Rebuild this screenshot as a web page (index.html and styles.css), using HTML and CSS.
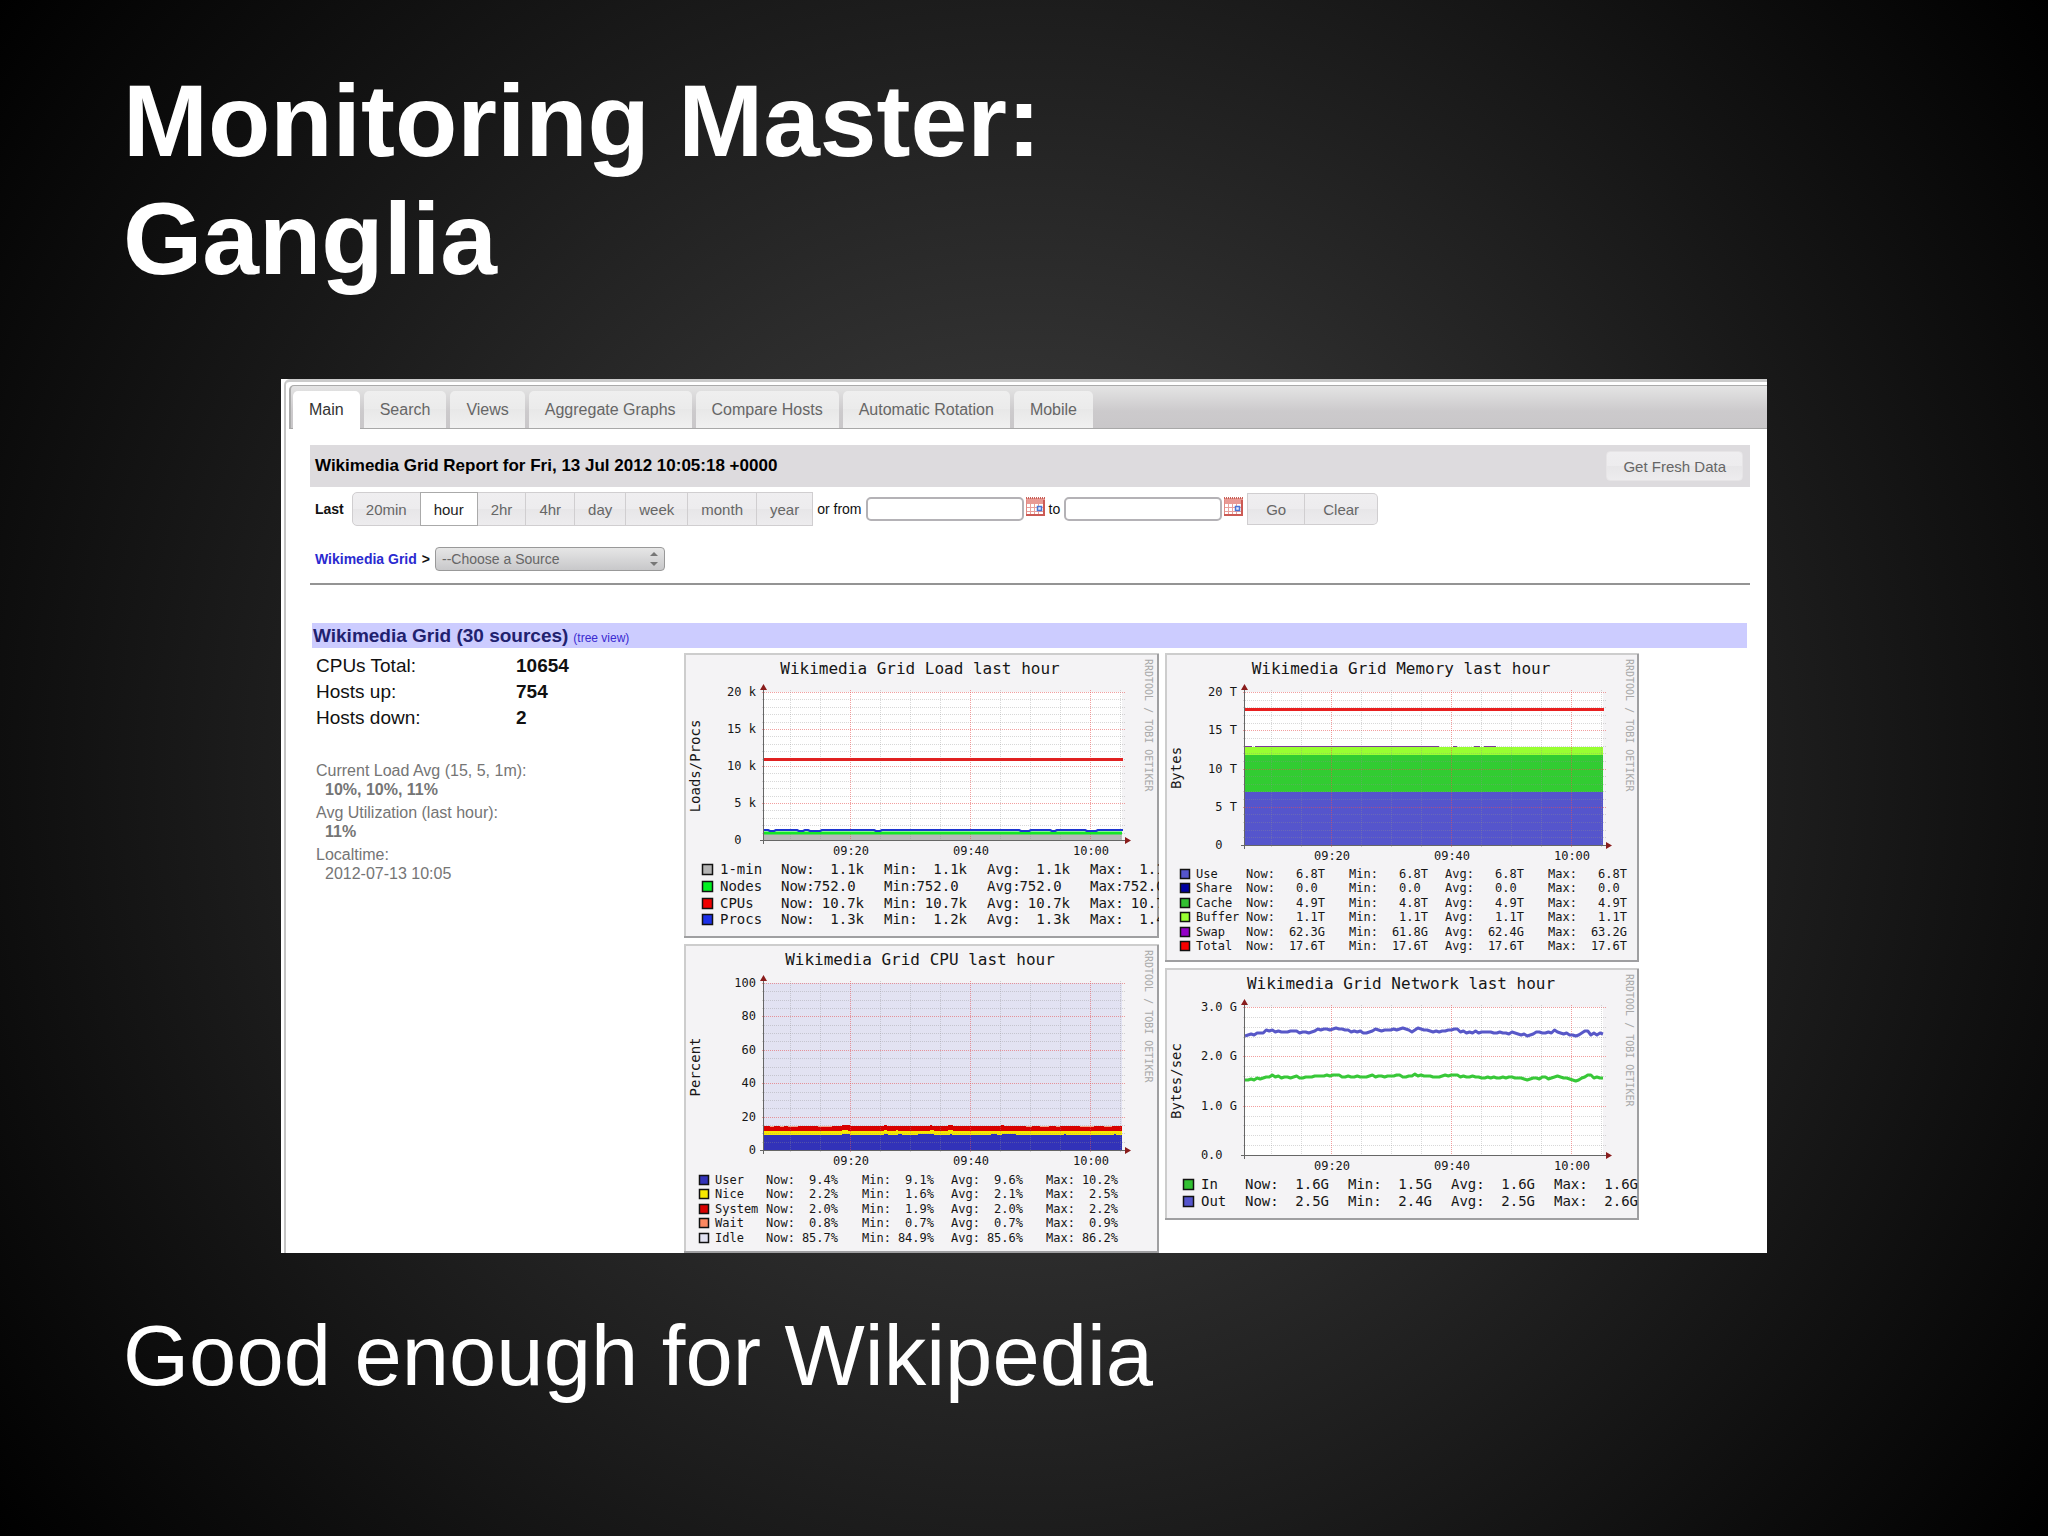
FILE: index.html
```html
<!DOCTYPE html>
<html lang="en">
<head>
  <meta charset="UTF-8">
  <title>Monitoring Master: Ganglia</title>
  <meta name="viewport" content="width=device-width, initial-scale=1.0">
  <link rel="stylesheet" href="styles.css">
</head>
<body>
  <main class="slide">
    <h1 class="slide-title">Monitoring Master:<br>Ganglia</h1>

    <section class="shot">
      <div class="window">
        <nav class="tabs">
          <a class="tab active" href="#">Main</a>
          <a class="tab" href="#">Search</a>
          <a class="tab" href="#">Views</a>
          <a class="tab" href="#">Aggregate Graphs</a>
          <a class="tab" href="#">Compare Hosts</a>
          <a class="tab" href="#">Automatic Rotation</a>
          <a class="tab" href="#">Mobile</a>
        </nav>

        <div class="content">
          <div class="report-bar">
            <h2>Wikimedia Grid Report for Fri, 13 Jul 2012 10:05:18 +0000</h2>
            <button class="btn fresh" type="button">Get Fresh Data</button>
          </div>

          <form class="range">
            <b class="last">Last</b>
            <div class="btn-group">
              <button class="btn" type="button">20min</button>
              <button class="btn active" type="button">hour</button>
              <button class="btn" type="button">2hr</button>
              <button class="btn" type="button">4hr</button>
              <button class="btn" type="button">day</button>
              <button class="btn" type="button">week</button>
              <button class="btn" type="button">month</button>
              <button class="btn" type="button">year</button>
            </div>
            <label for="from">or from</label>
            <input id="from" type="text">
            <svg class="calendar" viewBox="0 0 19 19"><use href="#cal"/></svg>
            <label for="to">to</label>
            <input id="to" type="text">
            <svg class="calendar" viewBox="0 0 19 19"><use href="#cal"/></svg>
            <div class="btn-group submit">
              <button class="btn" type="button">Go</button>
              <button class="btn" type="button">Clear</button>
            </div>
          </form>

          <div class="source">
            <a href="#">Wikimedia Grid</a>
            <label for="source">&gt;</label>
            <div class="select">
              <select id="source">
                <option>--Choose a Source</option>
              </select>
              <svg viewBox="0 0 8 16"><path d="M4 1l4 4H0zM4 15l4-4H0z" fill="#777"/></svg>
            </div>
          </div>
          <hr>

          <div class="grid-head">
            <h3>Wikimedia Grid (30 sources)</h3>
            <a href="#">(tree view)</a>
          </div>

          <div class="overview">
            <div class="stats">
              <table>
                <tr><th>CPUs Total:</th><td>10654</td></tr>
                <tr><th>Hosts up:</th><td>754</td></tr>
                <tr><th>Hosts down:</th><td>2</td></tr>
              </table>
              <dl>
                <dt>Current Load Avg (15, 5, 1m):</dt>
                <dd><b>10%, 10%, 11%</b></dd>
                <dt>Avg Utilization (last hour):</dt>
                <dd><b>11%</b></dd>
                <dt>Localtime:</dt>
                <dd>2012-07-13 10:05</dd>
              </dl>
            </div>
            <div class="graphs">
              <svg class="graph" id="load"></svg>
              <svg class="graph" id="cpu"></svg>
            </div>
            <div class="graphs">
              <svg class="graph" id="memory"></svg>
              <svg class="graph" id="network"></svg>
            </div>
          </div>
        </div>
      </div>
    </section>

    <p class="slide-note">Good enough for Wikipedia</p>
  </main>

  <!-- Shared calendar icon -->
  <svg class="symbols">
    <symbol id="cal" viewBox="0 0 19 19">
      <rect x="0" y="3" width="19" height="16" fill="#fff"/>
      <rect x="0" y="1" width="19" height="6" fill="#e89a94"/>
      <path d="M0 1h19" stroke="#c86058" stroke-width="2" stroke-dasharray="1 1"/>
      <path d="M4.500 7v11M8.500 7v11M12.500 7v11M1 10.500h17M1 14.500h17" stroke="#e8a09c"/>
      <path d="M0.500 3v15" stroke="#e08a84"/>
      <path d="M18 3v15H0" fill="none" stroke="#cc5a54" stroke-width="2"/>
      <rect x="11.500" y="9.500" width="4" height="4" fill="#dfe9fc" stroke="#4a74d4" stroke-width="1.500"/>
    </symbol>
  </svg>

  <script src="graphs.js"></script>
</body>
</html>
```

FILE: styles.css
```css
body {
  margin: 0;
  font-family: "Liberation Sans", Arial, sans-serif;
  font-size: 14px;
  color: #111;
  background: #000;
}

/* Slide */
.slide {
  box-sizing: border-box;
  min-height: 100vh;
  padding-top: 62px;
  background: radial-gradient(circle farthest-corner at center, #474747, #000);
}

.slide-title {
  margin: 0 123px 81px;
  font-size: 102px;
  line-height: 118px;
  color: #fff;
}

.slide-note {
  margin: 54px 123px 0;
  font-size: 85px;
  line-height: 98px;
  color: #fff;
}

/* Browser window */
.shot {
  margin: 0 281px;
  padding-left: 3px;
  overflow: hidden;
  background: #fff;
}

.window {
  border-top: 3px solid #cbcbcb;
  border-left: 2px solid #c4c4c4;
  border-top-left-radius: 6px;
  padding: 3px 0 0 3px;
}

.tabs {
  display: flex;
  align-items: flex-end;
  gap: 4px;
  height: 42px;
  padding-left: 2px;
  border-top: 1px solid #aaa;
  border-left: 2px solid #aaa;
  border-bottom: 1px solid #a8a8a8;
  border-top-left-radius: 5px;
  background: linear-gradient(#e4e4e4, #cccacc 60%, #c9c7c9);
}

.tab {
  height: 37px;
  padding: 0 16px;
  border-radius: 5px 5px 0 0;
  font-size: 16px;
  line-height: 37px;
  color: #666;
  text-decoration: none;
  background: linear-gradient(#efefef, #ebebeb 50%, #e8e8e8 50%, #f0f0f0);
}

.tab.active {
  height: 38px;
  margin-bottom: -1px;
  color: #333;
  background: #fff;
}

.content {
  padding: 16px 17px 0 21px;
}

/* Report header and time range */
.report-bar {
  display: flex;
  align-items: center;
  justify-content: space-between;
  height: 42px;
  padding: 0 7px 0 5px;
  background: #dddbde;
}

.report-bar h2 {
  margin: 0;
  font-size: 17px;
  color: #000;
}

.btn {
  box-sizing: border-box;
  height: 34px;
  padding: 0 13px;
  border: 1px solid #d0ced0;
  font: inherit;
  font-size: 15px;
  color: #666;
  background: linear-gradient(#efeef0, #edecee 50%, #e7e6e8 50%, #edecee);
}

.btn.active {
  border-color: #aaa;
  color: #222;
  background: #fff;
}

.btn.fresh {
  height: 30px;
  padding: 0 16px;
  border-color: #e6e4e6;
  border-radius: 4px;
}

.range {
  display: flex;
  align-items: center;
  gap: 4px;
  height: 36px;
  margin-top: 4px;
  padding-left: 5px;
}

.last {
  margin-right: 4px;
}

.btn-group {
  display: flex;
}

.btn-group .btn + .btn {
  border-left-width: 0;
}

.btn-group .btn.active {
  box-shadow: -1px 0 #aaa;
}

.btn-group .btn:first-child {
  border-radius: 5px 0 0 5px;
}

.btn-group.submit .btn {
  height: 32px;
  padding: 0 18px;
}

.btn-group.submit .btn:first-child {
  border-radius: 0;
}

.btn-group.submit .btn:last-child {
  border-radius: 0 5px 5px 0;
}

.range input {
  box-sizing: border-box;
  width: 158px;
  height: 24px;
  border: 2px solid #b4b2b6;
  border-radius: 5px;
  background: #fff;
}

.calendar {
  width: 19px;
  height: 19px;
  margin: 0 0 6px -2px;
}

.source {
  display: flex;
  align-items: center;
  gap: 5px;
  margin-top: 20px;
  padding-left: 5px;
  font-weight: bold;
}

.source a {
  color: #2a2ad0;
  text-decoration: none;
}

.select {
  position: relative;
}

.select select {
  box-sizing: border-box;
  width: 230px;
  height: 24px;
  padding: 0 6px;
  border: 1px solid #999;
  border-radius: 4px;
  appearance: none;
  font-family: inherit;
  font-size: 14px;
  color: #666;
  background: linear-gradient(#e6e6e6, #c8c8ca);
}

.select svg {
  position: absolute;
  top: 4px;
  right: 7px;
  width: 8px;
  height: 16px;
}

hr {
  height: 2px;
  margin: 12px 0 0;
  border: 0;
  background: #949494;
}

/* Grid overview */
.grid-head {
  display: flex;
  align-items: baseline;
  gap: 5px;
  height: 25px;
  margin: 38px 3px 5px 2px;
  padding-left: 1px;
  background: #ccccff;
}

.grid-head h3 {
  margin: 0;
  font-size: 19px;
  line-height: 25px;
  color: #21216e;
}

.grid-head a {
  font-size: 12px;
  color: #3a2ad0;
  text-decoration: none;
}

.overview {
  display: flex;
  gap: 6px;
}

.stats {
  width: 362px;
  padding-left: 6px;
}

.stats table {
  border-collapse: collapse;
  font-size: 19px;
  line-height: 26px;
}

.stats th,
.stats td {
  padding: 0;
  text-align: left;
}

.stats th {
  width: 200px;
  font-weight: normal;
}

.stats td {
  font-weight: bold;
}

.stats dl {
  margin: 30px 0 0;
  font-size: 16px;
  line-height: 19px;
  color: #757575;
}

.stats dd {
  margin: 0 0 4px 9px;
}

.graphs {
  display: flex;
  flex-direction: column;
  gap: 6px;
}

.graph {
  display: block;
  font-family: "DejaVu Sans Mono", monospace;
}

.symbols {
  display: none;
}
```

FILE: graphs.js
```js
const SVG_NS = 'http://www.w3.org/2000/svg';
const LEFT = 80;     // x of the y axis
const RIGHT = 438;   // x of the last sample
const TOP = 39;      // y of the highest gridline
const INK = '#161616';

function add(svg, tag, attrs, text) {
  const el = document.createElementNS(SVG_NS, tag);
  for (const key in attrs) el.setAttribute(key, attrs[key]);
  if (text !== undefined) el.textContent = text;
  svg.appendChild(el);
  return el;
}

/** gridLine - Adds one dotted line, red when it is a major one. */
function gridLine(svg, d, major) {
  add(svg, 'path', {
    d: d,
    stroke: major ? '#e85050' : '#909090',
    'stroke-opacity': major ? 0.55 : 0.35,
    'stroke-dasharray': '1 1'
  });
}

/**
 * drawGraph - Draws one RRDtool style graph: frame, grid, data, axes, legend.
 */
function drawGraph(id, g) {
  const svg = document.getElementById(id);
  const W = g.width;
  const H = g.height;
  const bottom = g.bottom;
  svg.setAttribute('width', W);
  svg.setAttribute('height', H);

  // Frame
  add(svg, 'rect', { width: W, height: H, fill: '#f4f3f5' });
  add(svg, 'path', { d: `M1 ${H}V1H${W}`, fill: 'none', stroke: '#cdcdcd', 'stroke-width': 2 });
  add(svg, 'path', {
    d: `M${W - 1} 1V${H}M0 ${H - 1}H${W}`,
    fill: 'none', stroke: '#9f9fa1', 'stroke-width': 2
  });

  // Canvas and filled areas
  add(svg, 'rect', { x: LEFT, y: TOP, width: RIGHT - LEFT, height: bottom - TOP, fill: '#fff' });
  (g.areas || []).forEach(([y, y2, fill]) => {
    add(svg, 'rect', { x: LEFT, y: y, width: RIGHT - LEFT, height: y2 - y, fill: fill });
  });

  // Grid
  for (let i = 0; i <= g.steps; i++) {
    const y = Math.round(bottom - i * (bottom - TOP) / g.steps) + 0.5;
    gridLine(svg, `M${LEFT - 2} ${y}H${RIGHT + 3}`, i % g.every === 0);
  }
  for (let i = 0; i < 12; i++) {
    const x = 106 + i * 30 + 0.5;
    gridLine(svg, `M${x} ${TOP - 2}V${bottom + 2}`, i % 4 === 2);
  }

  // Data lines
  (g.lines || []).forEach(([d, stroke, width]) => {
    add(svg, 'path', { d: d, fill: 'none', stroke: stroke, 'stroke-width': width, 'stroke-linejoin': 'round' });
  });

  // Axes
  add(svg, 'path', { d: `M${LEFT - 0.5} ${TOP - 4}V${bottom + 4}M${LEFT - 4} ${bottom + 0.5}H${RIGHT + 4}`, stroke: '#666' });
  add(svg, 'path', {
    d: `M${LEFT - 4} ${TOP - 2}h7l-3.5 -6zM${RIGHT + 3} ${bottom - 3}v7l6 -3.5z`,
    fill: '#8a1c1c'
  });

  // Labels
  add(svg, 'text', { x: 236, y: 21, 'font-size': 16, 'text-anchor': 'middle', fill: INK }, g.title);
  add(svg, 'text', {
    transform: `translate(16 ${g.unitY}) rotate(-90)`, 'font-size': 14, 'text-anchor': 'middle', fill: INK
  }, g.unit);
  add(svg, 'text', { transform: 'translate(461 6) rotate(90)', 'font-size': 10, fill: '#a8a8a8' }, 'RRDTOOL / TOBI OETIKER');
  g.ticks.forEach((label, i) => {
    const y = Math.round(bottom - i * (bottom - TOP) / (g.ticks.length - 1)) + 4;
    add(svg, 'text', { x: 72, y: y, 'font-size': 12, 'text-anchor': 'end', fill: INK }, label);
  });
  ['09:20', '09:40', '10:00'].forEach((label, i) => {
    add(svg, 'text', { x: 167 + i * 120, y: bottom + 15, 'font-size': 12, 'text-anchor': 'middle', fill: INK }, label);
  });

  // Legend
  const l = g.legend;
  const box = l.size === 14 ? 10 : 9;
  const pitch = l.size * 1.2;
  l.rows.forEach(([color, name, ...values], i) => {
    const y = l.y + Math.round(i * pitch);
    add(svg, 'rect', { x: l.x + 0.5, y: y - box + 0.5, width: box, height: box, fill: color, stroke: '#111', 'stroke-width': 1.5 });
    add(svg, 'text', { x: l.labelX, y: y, 'font-size': l.size, fill: INK }, name);
    values.forEach((value, c) => {
      add(svg, 'text', { x: l.cols[c], y: y, 'font-size': l.size, fill: INK }, ['Now:', 'Min:', 'Avg:', 'Max:'][c]);
      add(svg, 'text', { x: l.cols[c] + l.span, y: y, 'font-size': l.size, 'text-anchor': 'end', fill: INK }, value);
    });
  });
}

/** trace - Turns a list of heights into a path across the canvas. */
function trace(values) {
  const step = (RIGHT - LEFT) / (values.length - 1);
  return values.map((v, i) => (i ? 'L' : 'M') + (LEFT + i * step).toFixed(1) + ' ' + v).join('');
}

drawGraph('load', {
  width: 475, height: 285, bottom: 187,
  title: 'Wikimedia Grid Load last hour', unit: 'Loads/Procs', unitY: 113,
  ticks: ['0\u00a0\u00a0', '5 k', '10 k', '15 k', '20 k'], steps: 20, every: 5,
  areas: [[181, 187, '#b9b9b9']],
  lines: [
    ['M80 106.500H439', '#e02020', 3],
    ['M80 180H438', '#14e626', 3],
    ['M80 177H84L86 178H90L92 177H113L115 178H119L121 177H124L126 178H136L138 177H190L192 178H196L198 177H335L337 178H345L347 177H366L368 178H371L373 177H401L403 178H412L414 177H439', '#1c34d0', 2]
  ],
  legend: {
    size: 14, x: 18, labelX: 36, y: 221, cols: [97, 200, 303, 406], span: 83,
    rows: [
      ['#b4b4b4', '1-min', '1.1k', '1.1k', '1.1k', '1.1k'],
      ['#00f020', 'Nodes', '752.0\u00a0', '752.0\u00a0', '752.0\u00a0', '752.0\u00a0'],
      ['#f00000', 'CPUs', '10.7k', '10.7k', '10.7k', '10.7k'],
      ['#1c30e8', 'Procs', '1.3k', '1.2k', '1.3k', '1.4k']
    ]
  }
});

drawGraph('cpu', {
  width: 475, height: 309, bottom: 206,
  title: 'Wikimedia Grid CPU last hour', unit: 'Percent', unitY: 123,
  ticks: ['0', '20', '40', '60', '80', '100'], steps: 20, every: 4,
  areas: [
    [39, 182, '#e2e2f2'],
    [182, 187, '#d80000'],
    [187, 191, '#f8e800'],
    [191, 206, '#3232b8']
  ],
  lines: [
    ['M86 182.500h4M96 182.500h4M104 182.500h10M134 182.500h14M342 182.500h6M356 182.500h9M372 182.500h4M396 182.500h14M420 182.500h8', '#f4a48c', 1],
    ['M158 181.500h8M200 181.500h3M246 181.500h2M264 181.500h5M317 181.500h3', '#d80000', 1],
    ['M158 190.500h8M200 190.500h4M214 190.500h4M234 190.500h16M266 190.500h2M307 190.500h6M318 190.500h14M380 190.500h2M430 190.500h2', '#3232b8', 1],
    ['M158 186.500h6M200 186.500h3M212 186.500h2M246 186.500h4M264 186.500h5', '#f8e800', 1]
  ],
  legend: {
    size: 12, x: 15, labelX: 31, y: 240, cols: [82, 178, 267, 362], span: 72,
    rows: [
      ['#3232b8', 'User', '9.4%', '9.1%', '9.6%', '10.2%'],
      ['#f8e800', 'Nice', '2.2%', '1.6%', '2.1%', '2.5%'],
      ['#d80000', 'System', '2.0%', '1.9%', '2.0%', '2.2%'],
      ['#fc8860', 'Wait', '0.8%', '0.7%', '0.7%', '0.9%'],
      ['#e2e2f2', 'Idle', '85.7%', '84.9%', '85.6%', '86.2%']
    ]
  }
});

drawGraph('memory', {
  width: 474, height: 309, bottom: 192,
  title: 'Wikimedia Grid Memory last hour', unit: 'Bytes', unitY: 115,
  ticks: ['0\u00a0\u00a0', '5 T', '10 T', '15 T', '20 T'], steps: 20, every: 5,
  areas: [
    [94, 102, '#98ff32'],
    [102, 139, '#32cc32'],
    [139, 192, '#5555cc']
  ],
  lines: [
    ['M80 56.500H439', '#e82020', 3],
    ['M80 93.500H87M90 93.500H274M288 93.500H292M309 93.500H315M319 93.500H331', '#7a3c98', 1]
  ],
  legend: {
    size: 12, x: 15, labelX: 31, y: 225, cols: [81, 184, 280, 383], span: 79,
    rows: [
      ['#5555cc', 'Use', '6.8T', '6.8T', '6.8T', '6.8T'],
      ['#0000a0', 'Share', '0.0\u00a0', '0.0\u00a0', '0.0\u00a0', '0.0\u00a0'],
      ['#32c032', 'Cache', '4.9T', '4.8T', '4.9T', '4.9T'],
      ['#98ff32', 'Buffer', '1.1T', '1.1T', '1.1T', '1.1T'],
      ['#9400c8', 'Swap', '62.3G', '61.8G', '62.4G', '63.2G'],
      ['#f80000', 'Total', '17.6T', '17.6T', '17.6T', '17.6T']
    ]
  }
});

drawGraph('network', {
  width: 474, height: 252, bottom: 187,
  title: 'Wikimedia Grid Network last hour', unit: 'Bytes/sec', unitY: 113,
  ticks: ['0.0\u00a0\u00a0', '1.0 G', '2.0 G', '3.0 G'], steps: 15, every: 5,
  lines: [
    [trace([68, 67, 66, 67, 65, 65, 65, 62, 63, 62, 64, 63, 64, 64, 64, 63, 63, 63, 65, 64, 64, 65, 64, 63, 61, 62, 61, 61, 62, 61, 60, 61, 61, 62, 62, 64, 63, 64, 63, 65, 65, 64, 63, 61, 62, 63, 62, 62, 62, 61, 62, 61, 60, 61, 62, 64, 62, 60, 61, 62, 62, 63, 64, 63, 64, 63, 63, 62, 62, 61, 61, 64, 63, 65, 64, 65, 63, 65, 64, 64, 64, 64, 65, 65, 64, 65, 65, 66, 64, 65, 66, 67, 66, 68, 67, 66, 64, 64, 65, 65, 64, 65, 62, 64, 65, 66, 65, 67, 67, 68, 67, 65, 63, 63, 67, 65, 67, 65, 66]), '#5858c8', 3],
    [trace([112, 112, 111, 112, 110, 111, 110, 109, 109, 107, 109, 108, 110, 109, 109, 110, 109, 108, 110, 110, 109, 109, 109, 108, 108, 108, 108, 107, 108, 107, 107, 107, 109, 109, 108, 109, 109, 108, 109, 109, 109, 108, 107, 109, 108, 108, 109, 108, 108, 108, 107, 107, 109, 109, 108, 108, 106, 108, 107, 108, 108, 108, 109, 109, 109, 108, 107, 108, 107, 107, 107, 109, 108, 109, 109, 108, 109, 109, 110, 110, 109, 110, 109, 110, 110, 109, 110, 109, 109, 110, 110, 110, 111, 112, 111, 110, 110, 111, 109, 109, 111, 110, 109, 108, 109, 110, 110, 111, 112, 113, 112, 110, 109, 107, 107, 110, 109, 110, 110]), '#38c838', 3]
  ],
  legend: {
    size: 14, x: 18, labelX: 36, y: 221, cols: [80, 183, 286, 389], span: 84,
    rows: [
      ['#32c032', 'In', '1.6G', '1.5G', '1.6G', '1.6G'],
      ['#5555cc', 'Out', '2.5G', '2.4G', '2.5G', '2.6G']
    ]
  }
});
```
